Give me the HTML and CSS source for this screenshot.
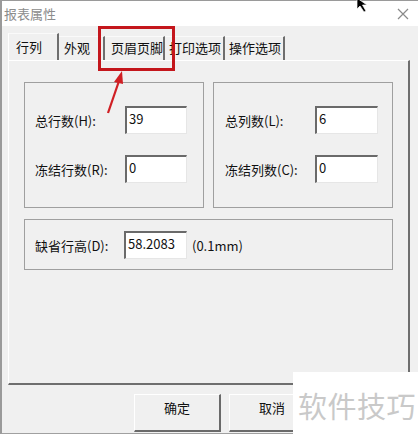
FILE: index.html
```html
<!DOCTYPE html>
<html lang="zh">
<head>
<meta charset="utf-8">
<link rel="stylesheet" href="styles.css">
</head>
<body>
<div class="window">
  <div class="titlebar">
    <span class="title">报表属性</span>
    <svg class="close" width="12" height="12" viewBox="0 0 12 12"><path d="M1 1L11 11M11 1L1 11" stroke="#8a8a8a" stroke-width="1.2"/></svg>
  </div>
  <div class="content">
    <div class="tabs">
      <div class="tab active">行列</div>
      <div class="tab t2">外观</div>
      <div class="tab t3">页眉页脚</div>
      <div class="tab t4">打印选项</div>
      <div class="tab t5">操作选项</div>
    </div>
    <div class="panel">
      <div class="group-row">
        <div class="group">
          <div class="field"><span class="label">总行数(H):</span><span class="input">39</span></div>
          <div class="field"><span class="label">冻结行数(R):</span><span class="input">0</span></div>
        </div>
        <div class="group g2">
          <div class="field"><span class="label">总列数(L):</span><span class="input">6</span></div>
          <div class="field"><span class="label">冻结列数(C):</span><span class="input">0</span></div>
        </div>
      </div>
      <div class="group wide">
        <div class="field"><span class="label">缺省行高(D):</span><span class="input in3">58.2083</span><span class="unit">(0.1mm)</span></div>
      </div>
    </div>
    <div class="buttons">
      <div class="btn">确定</div>
      <div class="btn">取消</div>
    </div>
  </div>
  <div class="highlight"></div>
  <svg class="arrow" width="30" height="50" viewBox="0 0 30 50"><path d="M8 45L19 13" stroke="#d01f24" stroke-width="2.2"/><path d="M22 3L14 14L23 16Z" fill="#d01f24"/></svg>
  <svg class="cursor" width="16" height="16" viewBox="0 0 16 16"><path d="M1 0L1 11L4 8L8 14L10 13L6.5 7L11 7Z" fill="#000" stroke="#fff" stroke-width="0.7"/></svg>
  <div class="watermark">软件技巧</div>
</div>
</body>
</html>
```
FILE: styles.css
```css
* { box-sizing: border-box; }
html, body { margin: 0; padding: 0; }
body {
  width: 418px; height: 434px; overflow: hidden;
  font-family: "Noto Sans CJK SC", "Noto Sans", sans-serif;
  font-size: 13px; color: #111;
  background: #f0f0f0;
}
.window {
  position: relative; width: 418px; height: 434px;
  border-left: 2px solid #9a9a9a;
  border-top: 1px solid #9a9a9a;
  border-bottom: 1px solid #a0a0a0;
  background: #f0f0f0;
}
.titlebar {
  height: 25px; background: #fff;
  display: flex; align-items: center; justify-content: space-between;
  padding: 0 9px 0 2px;
}
.title { color: #8c8c8c; font-size: 13px; line-height: 1; }
.close { margin-top: 1px; }
.content { padding: 7px 0 0 6px; }
.tabs { display: flex; align-items: flex-end; height: 27px; }
.tab {
  height: 24px; line-height: 22px; padding-left: 5px;
  border-right: 2px solid #6e6e6e;
  border-top: 1px solid #fafafa;
  font-size: 13px;
}
.tab.active { height: 27px; width: 51px; padding-left: 7px; line-height: 26px; border-left: 1px solid #fff; }
.t2 { width: 46px; }
.t3 { width: 60px; padding-left: 6px; }
.t4 { width: 60px; padding-left: 4px; }
.t5 { width: 60px; padding-left: 4px; }
.panel {
  width: 402px; height: 325px;
  border-top: 1px solid #fff;
  border-left: 1px solid #fff;
  border-right: 2px solid #6e6e6e;
  border-bottom: 2px solid #6e6e6e;
  padding: 21px 0 0 15px;
}
.group-row { display: flex; gap: 9px; }
.group {
  width: 180px; height: 126px;
  border: 1px solid #9f9f9f;
  padding: 23px 0 0 10px;
  display: flex; flex-direction: column; gap: 21px;
}
.g2 { padding-left: 11px; }
.group.wide { width: 369px; height: 51px; margin-top: 11px; padding-top: 11px; }
.field { display: flex; align-items: center; height: 28px; }
.label { width: 90px; font-size: 13px; }
.input {
  width: 62px; height: 28px; background: #fff;
  border-top: 2px solid #6a6a6a; border-left: 2px solid #6a6a6a;
  border-right: 1px solid #e6e6e6; border-bottom: 1px solid #e6e6e6;
  padding: 1px 0 0 2px; line-height: 20px; font-size: 13px;
}
.g2 .input { width: 63px; }
.in3 { width: 63px; margin-left: -1px; }
.unit { margin-left: 5px; }
.buttons { display: flex; gap: 8px; padding: 9px 0 0 126px; }
.btn {
  width: 87px; height: 38px; text-align: center; line-height: 26px;
  border-top: 1px solid #fff; border-left: 1px solid #fff;
  border-right: 2px solid #6a6a6a; border-bottom: 2px solid #6a6a6a;
}
.highlight {
  position: absolute; left: 96px; top: 25px; width: 77px; height: 45px;
  border: 3px solid #c4161c;
}
.arrow { position: absolute; left: 98px; top: 67px; }
.cursor { position: absolute; left: 354px; top: -3px; }
.watermark {
  position: absolute; left: 291px; top: 371px; width: 130px; height: 66px;
  background: #fff; color: #c9c9c9;
  font-size: 29px; line-height: 66px; padding-left: 5px; letter-spacing: 0.5px;
}
```
